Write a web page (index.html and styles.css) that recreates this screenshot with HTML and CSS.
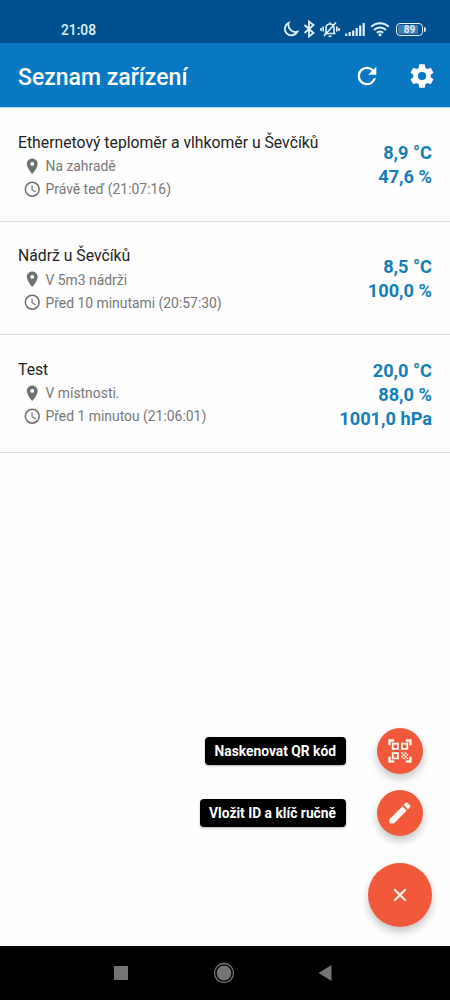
FILE: index.html
```html
<!DOCTYPE html>
<html lang="cs">
<head>
    <meta charset="UTF-8">
    <meta name="viewport" content="width=device-width, initial-scale=1.0">
    <title>Seznam zařízení</title>
    <link rel="stylesheet" href="styles.css">
</head>
<body>

<!-- shared icons -->
<svg class="symbols" width="0" height="0">
    <symbol id="pin" viewBox="0 0 24 24">
        <path d="M12 2C8.130 2 5 5.130 5 9c0 5.250 7 13 7 13s7-7.750 7-13c0-3.870-3.130-7-7-7zm0 9.500a2.500 2.500 0 0 1 0-5 2.500 2.500 0 0 1 0 5z"/>
    </symbol>
    <symbol id="clock" viewBox="0 0 24 24">
        <path d="M12 2a10 10 0 1 0 0 20 10 10 0 0 0 0-20zm0 18a8 8 0 1 1 0-16 8 8 0 0 1 0 16zm.5-13H11v6l5.250 3.150.75-1.230-4.500-2.670z"/>
    </symbol>
</svg>

<div class="status-bar">
    <span class="time">21:08</span>
    <div class="status-icons">
        <svg class="moon" width="16" height="16" viewBox="0 0 16 16">
            <path d="M5.800 1.700a6.600 6.600 0 1 0 8.600 9C9.500 12.200 3.900 7.500 5.800 1.700z"/>
        </svg>
        <svg class="bluetooth" width="12" height="18" viewBox="0 0 12 18">
            <path d="M1.500 5l9 8L6 16.500v-15L10.500 5l-9 8"/>
        </svg>
        <svg class="bell" width="20" height="18" viewBox="0 0 20 18">
            <path d="M4.500 13.500h11M6 13V8a4 4 0 0 1 8 0v5M10 4V2.500M8.500 16.200h3M4 16L16 2.500M1 8v3M3.200 6.500v5M19 8v3M16.800 6.500v5"/>
        </svg>
        <svg class="signal" width="20" height="14" viewBox="0 0 20 14">
            <path d="M1.200 14v-2.500M4.700 14v-4M8.200 14V8.500M11.700 14V6M15.200 14V3.500M18.700 14V1"/>
        </svg>
        <svg class="wifi" width="20" height="16" viewBox="0 0 20 16">
            <path d="M1.200 5.800c5-4.700 12.600-4.700 17.600 0M4 8.900c3.500-3.200 8.500-3.200 12 0M6.800 11.800c2-1.600 4.400-1.600 6.400 0"/>
            <circle cx="10" cy="13.800" r="1.500"/>
        </svg>
        <div class="battery">89</div>
    </div>
</div>

<header class="app-bar">
    <h1>Seznam zařízení</h1>
    <svg class="action" viewBox="0 0 24 24">
        <path d="M17.650 6.350A7.958 7.958 0 0 0 12 4a8 8 0 1 0 7.730 10h-2.080A6 6 0 1 1 12 6c1.660 0 3.140.69 4.220 1.780L13 11h7V4z"/>
    </svg>
    <svg class="action" viewBox="0 0 24 24">
        <path d="M19.430 12.980c.04-.32.07-.64.07-.98s-.03-.66-.07-.98l2.110-1.650c.19-.15.24-.42.12-.64l-2-3.460c-.12-.22-.39-.3-.61-.22l-2.490 1c-.52-.4-1.080-.73-1.690-.98l-.38-2.650C14.460 2.180 14.250 2 14 2h-4c-.25 0-.46.18-.49.42l-.38 2.650c-.61.25-1.170.59-1.690.98l-2.490-1c-.23-.09-.49 0-.61.22l-2 3.460c-.13.22-.07.49.12.64l2.110 1.650c-.04.32-.07.65-.07.98s.03.66.07.98l-2.110 1.650c-.19.15-.24.42-.12.64l2 3.460c.12.22.39.3.61.22l2.490-1c.52.4 1.080.73 1.690.98l.38 2.650c.03.24.24.42.49.42h4c.25 0 .46-.18.49-.42l.38-2.650c.61-.25 1.170-.59 1.690-.98l2.490 1c.23.09.49 0 .61-.22l2-3.460c.12-.22.07-.49-.12-.64zM12 15.500a3.500 3.500 0 1 1 0-7 3.500 3.500 0 0 1 0 7z"/>
    </svg>
</header>

<main class="devices">
    <div class="device">
        <div class="info">
            <h2>Ethernetový teploměr a vlhkoměr u Ševčíků</h2>
            <p><svg><use href="#pin"/></svg>Na zahradě</p>
            <p><svg><use href="#clock"/></svg>Právě teď (21:07:16)</p>
        </div>
        <div class="values">
            <span>8,9 °C</span>
            <span>47,6 %</span>
        </div>
    </div>
    <div class="device">
        <div class="info">
            <h2>Nádrž u Ševčíků</h2>
            <p><svg><use href="#pin"/></svg>V 5m3 nádrži</p>
            <p><svg><use href="#clock"/></svg>Před 10 minutami (20:57:30)</p>
        </div>
        <div class="values">
            <span>8,5 °C</span>
            <span>100,0 %</span>
        </div>
    </div>
    <div class="device tall">
        <div class="info">
            <h2>Test</h2>
            <p><svg><use href="#pin"/></svg>V místnosti.</p>
            <p><svg><use href="#clock"/></svg>Před 1 minutou (21:06:01)</p>
        </div>
        <div class="values">
            <span>20,0 °C</span>
            <span>88,0 %</span>
            <span>1001,0 hPa</span>
        </div>
    </div>
</main>

<!-- floating menu above the list -->
<div class="fab-menu">
    <div class="fab-row">
        <span class="fab-label">Naskenovat QR kód</span>
        <button class="fab">
            <svg width="28" height="28" viewBox="0 0 24 24">
                <path d="M9.500 6.500v3h-3v-3h3M11 5H5v6h6V5zm-1.500 9.500v3h-3v-3h3M11 13H5v6h6v-6zm6.500-6.500v3h-3v-3h3M19 5h-6v6h6V5zm-6 8h1.500v1.500H13V13zm1.500 1.500H16V16h-1.500v-1.500zM16 13h1.500v1.500H16V13zm-3 3h1.500v1.500H13V16zm1.500 1.500H16V19h-1.500v-1.500zM16 16h1.500v1.500H16V16zm1.500-1.500H19V16h-1.500v-1.500zm0 3H19V19h-1.500v-1.500zM22 7h-2V4h-3V2h5v5zm0 15v-5h-2v3h-3v2h5zM2 22h5v-2H4v-3H2v5zM2 2v5h2V4h3V2H2z"/>
            </svg>
        </button>
    </div>
    <div class="fab-row">
        <span class="fab-label">Vložit ID a klíč ručně</span>
        <button class="fab">
            <svg width="28" height="28" viewBox="0 0 24 24">
                <path d="M3 17.250V21h3.750L17.810 9.940l-3.750-3.750zM20.710 7.040a1 1 0 0 0 0-1.410l-2.340-2.340a1 1 0 0 0-1.410 0l-1.830 1.830 3.750 3.750z"/>
            </svg>
        </button>
    </div>
    <button class="fab main">
        <svg width="14" height="14" viewBox="0 0 14 14">
            <path class="cross" d="M1.300 1.300l11.400 11.400M12.700 1.300L1.300 12.700"/>
        </svg>
    </button>
</div>

<nav class="nav-bar">
    <svg viewBox="0 0 22 22"><path d="M4 4h14v14H4z"/></svg>
    <svg viewBox="0 0 22 22"><circle cx="11" cy="11" r="7.400"/><circle class="ring" cx="11" cy="11" r="9.500"/></svg>
    <svg viewBox="0 0 22 22"><path d="M2.500 11L15.500 3v16z"/></svg>
</nav>

</body>
</html>
```

FILE: styles.css
```css
* {
    box-sizing: border-box;
}

body {
    margin: 0;
    height: 1000px;
    display: flex;
    flex-direction: column;
    position: relative;
    font-family: Roboto, "Liberation Sans", sans-serif;
    background-color: #fefefe;
    color: #222;
    overflow: hidden;
}

h1, h2, p {
    margin: 0;
    font-weight: 400;
}

svg {
    display: block;
    flex: none;
    fill: currentColor;
}

.symbols {
    position: absolute;
}

/* status bar */
.status-bar {
    height: 43px;
    padding: 16px 25px 0 61px;
    display: flex;
    justify-content: space-between;
    background-color: #00508f;
    color: #e2f2fb;
}

.time {
    font-size: 13.8px;
    font-weight: 500;
    line-height: 28px;
}

.status-icons {
    height: 26px;
    display: flex;
    align-items: center;
}

.moon, .bluetooth, .bell, .signal {
    fill: none;
    stroke: currentColor;
    stroke-width: 1.8;
}

.bluetooth {
    margin-left: 4px;
}

.bell {
    margin-left: 5px;
    stroke-width: 1.6;
}

.signal {
    margin-left: 5px;
    stroke-width: 2.2;
}

.wifi {
    margin-left: 5px;
}

.wifi path {
    fill: none;
    stroke: currentColor;
    stroke-width: 2.1;
}

.battery {
    position: relative;
    width: 27px;
    height: 13px;
    margin: 0 2px 0 6px;
    border: 1.5px solid #e2f2fb;
    border-radius: 4px;
    background: linear-gradient(90deg, #4580b3 85%, transparent 85%) content-box;
    padding: 1px;
    font-size: 10px;
    font-weight: 700;
    line-height: 9px;
    text-align: center;
}

.battery::after {
    content: "";
    position: absolute;
    right: -4px;
    top: 3px;
    width: 2px;
    height: 5px;
    border-radius: 0 2px 2px 0;
    background-color: #e2f2fb;
}

/* app bar */
.app-bar {
    height: 64px;
    padding: 0 14px 0 18px;
    display: flex;
    align-items: center;
    gap: 27px;
    background-color: #0878c2;
    color: white;
    box-shadow: 0 1px 1px #b8d8ea;
}

.app-bar h1 {
    flex: 1;
    font-size: 23px;
    font-weight: 500;
    padding-top: 4px;
}

.action {
    width: 28px;
    height: 28px;
    margin-top: 1px;
}

/* device list */
.devices {
    flex: 1;
    padding-top: 1px;
}

.device {
    height: 113.5px;
    padding: 23.5px 18px 0;
    display: flex;
    justify-content: space-between;
    border-bottom: 1px solid #dedede;
}

.device.tall {
    height: 118px;
}

.info h2 {
    font-size: 15.75px;
    line-height: 22px;
    margin-bottom: 1px;
}

.info p {
    height: 23px;
    padding-left: 5px;
    display: flex;
    align-items: center;
    gap: 4px;
    font-size: 13.9px;
    color: #777;
}

.info svg {
    width: 18.5px;
    height: 18.5px;
    color: #6f6f6f;
}

.values {
    padding-top: 9.5px;
    display: flex;
    flex-direction: column;
    text-align: right;
    font-size: 18.2px;
    font-weight: 700;
    line-height: 24.2px;
    color: #147eb8;
}

.tall .values {
    padding-top: 0;
}

/* floating buttons */
.fab-menu {
    position: absolute;
    right: 18.5px;
    bottom: 73px;
    display: flex;
    flex-direction: column;
    align-items: flex-end;
}

.fab-row {
    display: flex;
    align-items: center;
    gap: 31px;
    margin: 0 9px 16px 0;
}

.fab-label {
    height: 28px;
    padding: 0 9.5px;
    border-radius: 4px;
    background-color: black;
    color: white;
    font-size: 13.8px;
    font-weight: 700;
    line-height: 28px;
    box-shadow: 0 1px 2px rgba(0, 0, 0, 0.3);
}

.fab {
    width: 46px;
    height: 46px;
    padding: 0;
    display: flex;
    align-items: center;
    justify-content: center;
    border: none;
    border-radius: 50%;
    background-color: #f2593b;
    color: #fff8f0;
    box-shadow: 0 5px 9px rgba(0, 0, 0, 0.22);
}

.fab.main {
    width: 64px;
    height: 64px;
    margin-top: 11px;
}

.cross {
    fill: none;
    stroke: currentColor;
    stroke-width: 2.2;
}

/* system navigation */
.nav-bar {
    height: 54px;
    padding: 0 112px 0 110px;
    display: flex;
    align-items: center;
    justify-content: space-between;
    background-color: black;
    color: #747474;
}

.nav-bar svg {
    width: 22px;
    height: 22px;
}

.ring {
    fill: none;
    stroke: currentColor;
    stroke-width: 1.3;
}
```
